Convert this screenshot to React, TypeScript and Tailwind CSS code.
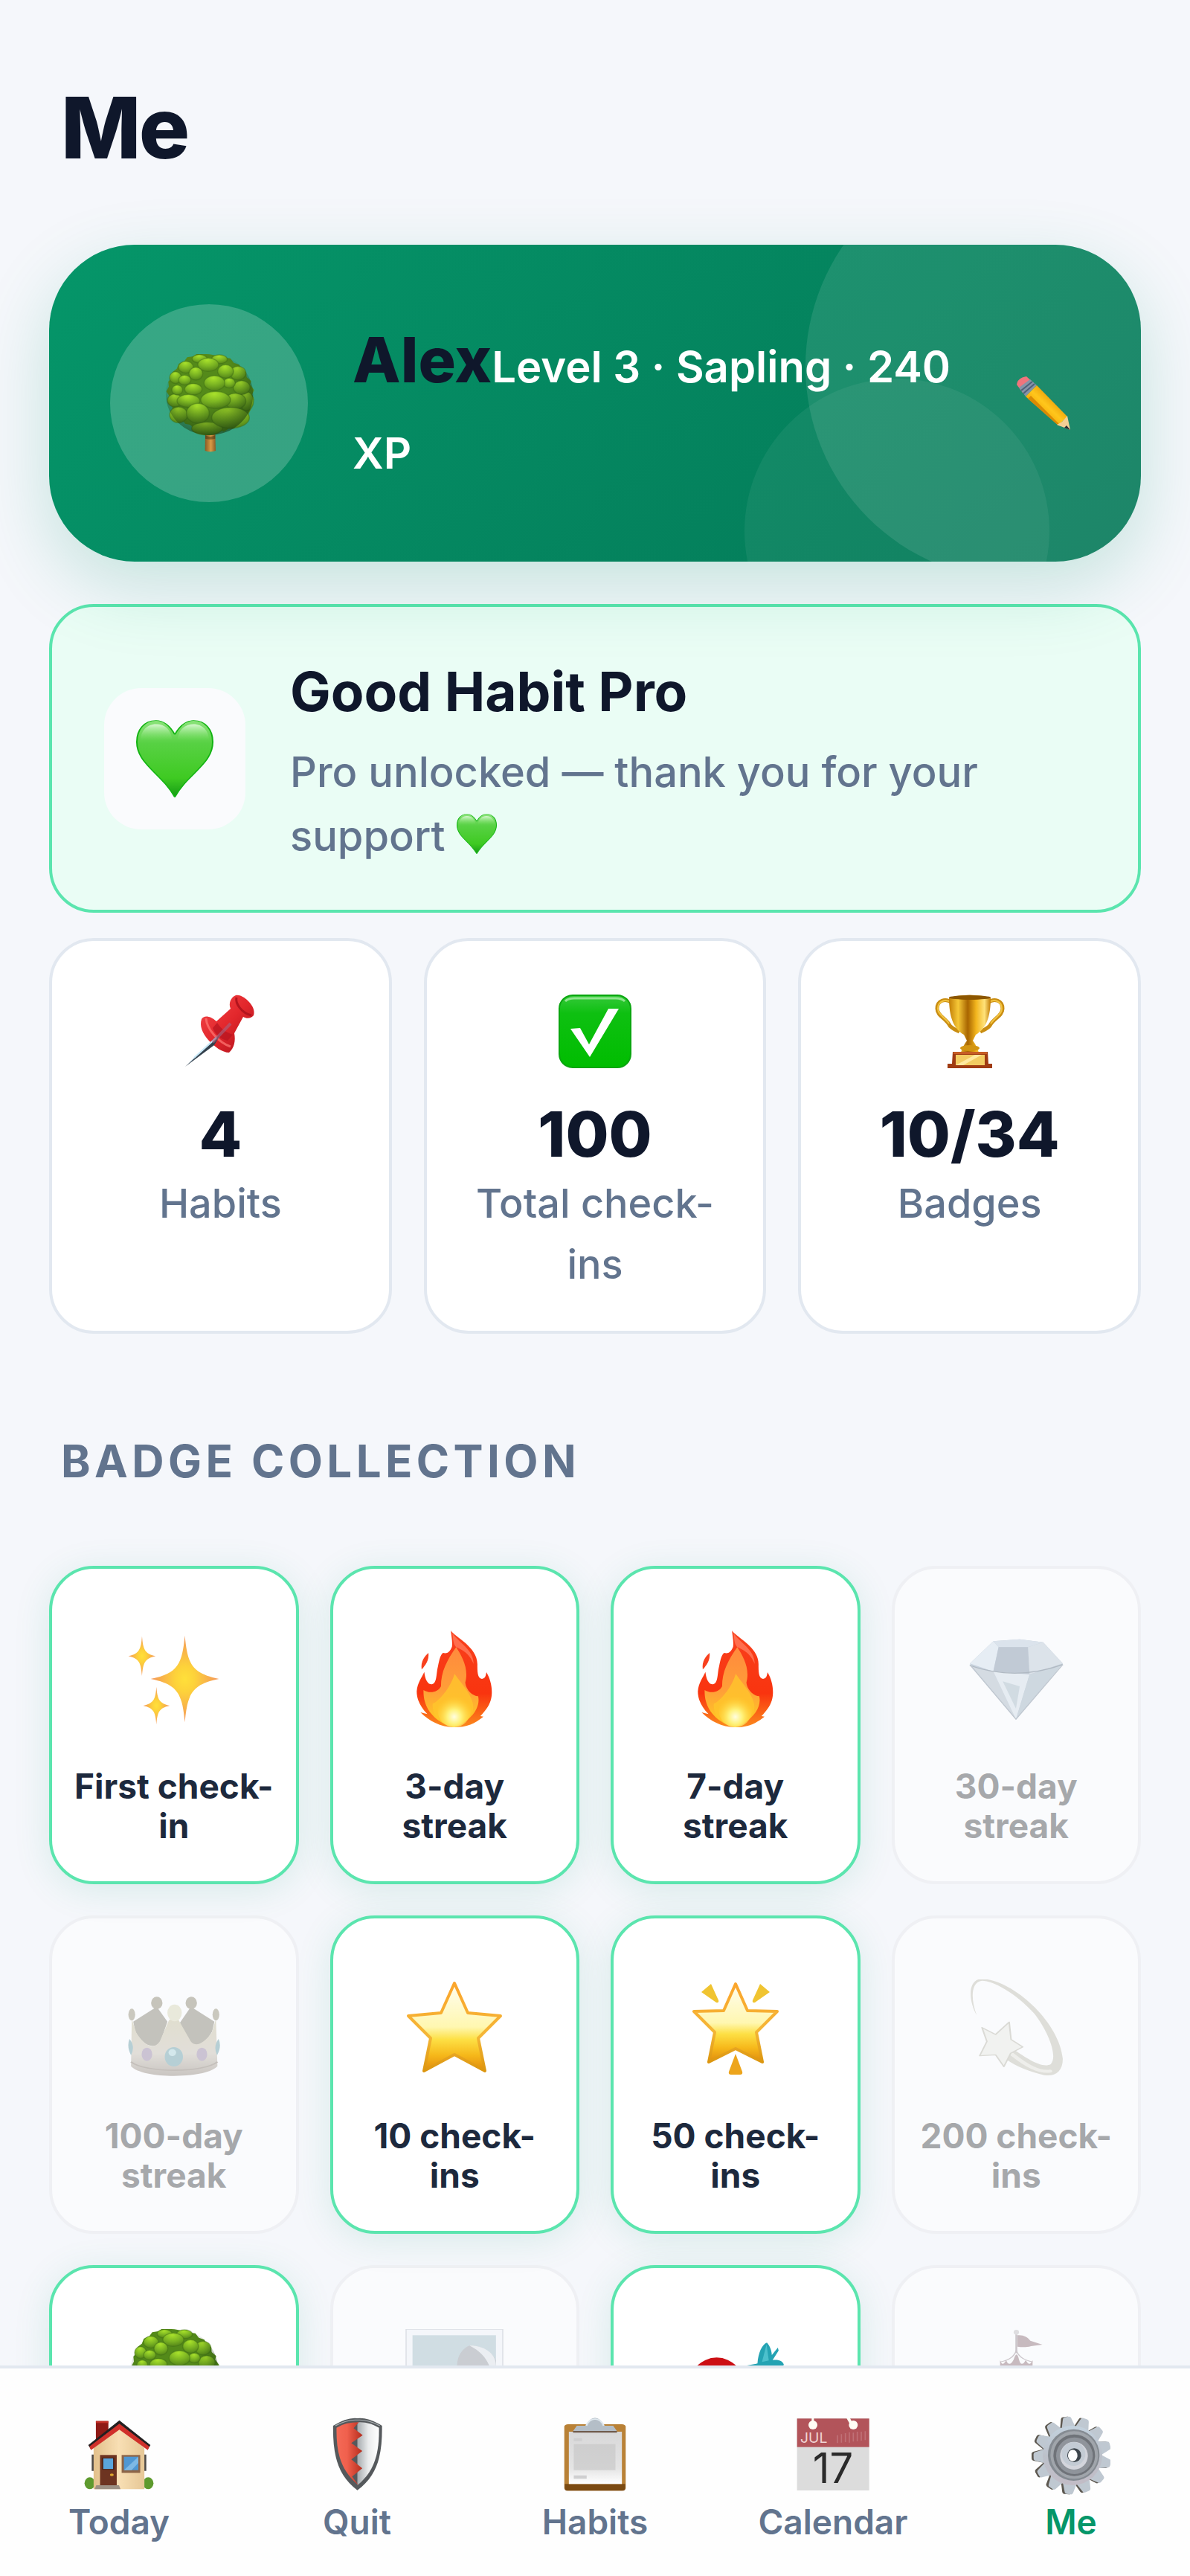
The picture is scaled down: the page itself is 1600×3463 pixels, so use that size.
import type { ReactNode } from "react";
import { clsx } from "clsx";

type IconProps = { className?: string };

type ArtProps = IconProps & { viewBox: string; children: ReactNode };

// Shared wrapper, every drawing fills its own square
function Art({ viewBox, className, children }: ArtProps) {
  return (
    <svg
      viewBox={viewBox}
      preserveAspectRatio="none"
      aria-hidden="true"
      className={clsx("shrink-0", className)}
    >
      {children}
    </svg>
  );
}

const LEAVES = [
  [235, 345, 62, 26],
  [120, 290, 36, 32],
  [105, 232, 30, 26],
  [395, 235, 28, 38],
  [350, 235, 42, 32],
  [205, 64, 30, 17],
  [285, 66, 32, 18],
  [150, 98, 30, 24],
  [360, 122, 32, 28],
  [108, 140, 24, 24],
  [310, 115, 32, 27],
  [375, 180, 34, 28],
  [240, 88, 42, 27],
  [190, 124, 28, 26],
  [145, 150, 25, 20],
  [325, 162, 24, 20],
  [115, 190, 22, 20],
  [265, 162, 42, 30],
  [180, 187, 35, 23],
  [160, 234, 46, 26],
  [270, 230, 60, 34],
  [198, 284, 46, 40],
  [330, 302, 76, 42],
];

function Tree({ className }: IconProps) {
  return (
    <Art viewBox="45 45 396 396" className={className}>
      <defs>
        <radialGradient id="leaf" cx="0.45" cy="0.15" r="0.95">
          <stop offset="0" stopColor="#a9e22b" />
          <stop offset="0.5" stopColor="#7ab322" />
          <stop offset="1" stopColor="#4a7a17" />
        </radialGradient>
        <radialGradient id="treeShade" cx="0.42" cy="0.28" r="0.75">
          <stop offset="0.45" stopColor="#1f4310" stopOpacity="0" />
          <stop offset="1" stopColor="#16350d" stopOpacity="0.6" />
        </radialGradient>
        <linearGradient id="trunk" x1="0" x2="1" y1="0" y2="0">
          <stop offset="0" stopColor="#8a5a24" />
          <stop offset="0.55" stopColor="#d99a45" />
          <stop offset="1" stopColor="#8a5a24" />
        </linearGradient>
      </defs>
      <path d="M228 365h40l2 70q-22 8-43 0z" fill="url(#trunk)" />
      <path
        d="M245 46l24 4 24-2 16 12 20 2 14 18 22 8 10 18 18 12 2 20 18 16-4 14 16 22-8 18 8 20-12 22-2 20-8 16 2 18-18 12-8 14-22 6-14 10-20 0-20 12-22-8-18 14-22-12-22 4-18-14-20 2-14-14-20-4-12-16-20-8-6-20-14-12 0-18-14-16 2-22-12-18 10-20-2-20 16-18 0-20 18-14 8-20 22-10 12-16 24-4 18-12 22 2z"
        fill="#548a1a"
      />
      {LEAVES.map(([cx, cy, rx, ry]) => (
        <ellipse key={`${cx}-${cy}`} cx={cx} cy={cy} rx={rx} ry={ry} fill="url(#leaf)" stroke="#3f6d13" strokeOpacity="0.45" strokeWidth="4" />
      ))}
      <ellipse cx="245" cy="208" rx="176" ry="164" fill="url(#treeShade)" />
      <path d="M228 372q20 12 40 0v14q-20 6-40 0z" fill="#3b2c0d" opacity="0.5" />
    </Art>
  );
}

function Pencil({ className }: IconProps) {
  return (
    <Art viewBox="0 0 74 74" className={className}>
      <defs>
        <linearGradient id="pencil" x1="0" y1="1" x2="1" y2="0">
          <stop offset="0.3" stopColor="#f5a400" />
          <stop offset="0.5" stopColor="#ffc61c" />
          <stop offset="0.7" stopColor="#e99b08" />
        </linearGradient>
      </defs>
      <path d="M1 12Q2 3 14 1l10 9-15 13z" fill="#f0747c" />
      <path d="M4 16l15-11 9 8-15 15z" fill="#8594a8" />
      <path d="M7 20l15-12M10 24l15-13" stroke="#4d6079" strokeWidth="2" />
      <path d="M13 28l15-15 41 42-12 12z" fill="url(#pencil)" />
      <path d="M16 31l4-4 41 41-4-1z" fill="#d98a05" />
      <path d="M69 54l4 19-18-7 7-4z" fill="#f4cf94" />
      <path d="M68 67l5 6-8-3z" fill="#2a2a33" />
    </Art>
  );
}

function Heart({ className }: IconProps) {
  return (
    <Art viewBox="177 571 105 315" className={className}>
      <defs>
        <linearGradient id="heart" x1="0" y1="0" x2="0" y2="1">
          <stop offset="0" stopColor="#8be37a" />
          <stop offset="0.3" stopColor="#57d143" />
          <stop offset="0.75" stopColor="#3fca22" />
          <stop offset="1" stopColor="#149a14" />
        </linearGradient>
        <linearGradient id="heartShine" x1="0" y1="0" x2="0" y2="1">
          <stop offset="0" stopColor="#d6f7cf" />
          <stop offset="1" stopColor="#7be067" stopOpacity="0" />
        </linearGradient>
      </defs>
      <path
        d="M229.500 630C223 595 215 573 204 573C188 573 178 610 178 660C178 750 212 790 229.500 885C247 790 281 750 281 660C281 610 271 573 255 573C244 573 236 595 229.500 630Z"
        fill="url(#heart)"
        stroke="#12b312"
        strokeWidth="2"
      />
      <path d="M183 655C183 615 192 588 204 588C216 588 224 610 226 650Z" fill="url(#heartShine)" />
      <path d="M276 655C276 615 267 588 255 588C243 588 235 610 233 650Z" fill="url(#heartShine)" />
    </Art>
  );
}

function Pin({ className }: IconProps) {
  return (
    <Art viewBox="0 0 100 100" className={className}>
      <defs>
        <linearGradient id="pin" x1="0" y1="0" x2="1" y2="1">
          <stop offset="0" stopColor="#f2494b" />
          <stop offset="0.5" stopColor="#e3272c" />
          <stop offset="1" stopColor="#a90f19" />
        </linearGradient>
      </defs>
      <path d="M25 33C28 28 36 28 45 36L64 19C61 12 64 4 71 1C76 0 82 3 88 9C94 15 97 22 95 28C92 32 86 33 81 30L69 52C71 62 69 72 62 78C53 78 42 70 34 61C26 52 22 42 25 33Z" fill="url(#pin)" />
      <path d="M72 4C70 12 79 25 92 28" fill="none" stroke="#b3141d" strokeWidth="3" />
      <path d="M31 32C32 46 47 64 64 70" fill="none" stroke="#ff7a75" strokeWidth="3" opacity="0.7" />
      <path d="M46 38C51 46 58 51 67 54L60 62C50 60 43 53 40 45Z" fill="#b81620" opacity="0.75" />
      <path d="M47 54L3 97L38 65Z" fill="#8fc0dc" />
      <path d="M51 53L3 97L42 68Z" fill="#33404c" />
      <path d="M45 58L15 85" stroke="#c6e6f5" strokeWidth="2" />
      <path d="M40 64L64 39" stroke="#a9607c" strokeWidth="4" opacity="0.65" />
    </Art>
  );
}

function Check({ className }: IconProps) {
  return (
    <Art viewBox="0 0 100 100" className={className}>
      <defs>
        <linearGradient id="check" x1="0" y1="0" x2="0" y2="1">
          <stop offset="0" stopColor="#35c93a" />
          <stop offset="0.25" stopColor="#0ec011" />
          <stop offset="1" stopColor="#00bd00" />
        </linearGradient>
      </defs>
      <rect x="2" y="1" width="96" height="97" rx="18" fill="url(#check)" stroke="#0aa60f" strokeWidth="2" />
      <path d="M10 9Q14 5 22 5h56q8 0 12 4" fill="none" stroke="#8fe58e" strokeWidth="3" />
      <path d="M17 46l13-1 12 22L68 19l14 0L43 84Z" fill="#fff" />
    </Art>
  );
}

function Trophy({ className }: IconProps) {
  return (
    <Art viewBox="0 0 100 100" className={className}>
      <defs>
        <linearGradient id="gold" x1="0" x2="1" y1="0" y2="0">
          <stop offset="0" stopColor="#c27e06" />
          <stop offset="0.22" stopColor="#f6c837" />
          <stop offset="0.45" stopColor="#a86500" />
          <stop offset="0.65" stopColor="#f2b51d" />
          <stop offset="0.85" stopColor="#ffe27a" />
          <stop offset="1" stopColor="#c17c05" />
        </linearGradient>
      </defs>
      <path d="M26 11C17 4 6 8 6 19C6 28 17 32 22 40C24 45 32 48 36 50M74 11C83 4 94 8 94 19C94 28 83 32 78 40C76 45 68 48 64 50" fill="none" stroke="#c98d12" strokeWidth="5" />
      <path d="M26 11C17 5 7 9 7 19C7 27 17 31 22 39M74 11C83 5 93 9 93 19C93 27 83 31 78 39" fill="none" stroke="#f3c440" strokeWidth="2" />
      <path d="M22 4Q50-3 78 4C78 30 72 46 58 54L54 62Q60 70 62 78H38Q40 70 46 62L42 54C28 46 22 30 22 4Z" fill="url(#gold)" />
      <ellipse cx="50" cy="4" rx="28" ry="3" fill="#8c5600" />
      <ellipse cx="50" cy="72" rx="13" ry="4" fill="#d39511" />
      <path d="M27 77h47l1 16h5v6H20v-6h6z" fill="#a03b12" />
      <path d="M28 77h45v3H28z" fill="#c65d25" />
      <rect x="31" y="81" width="39" height="14" fill="#f3cc62" />
      <path d="M31 95l26-14h9L41 95z" fill="#ffe9a0" />
    </Art>
  );
}

const SPARK =
  "M0-1C.08-.36 .18-.13 1 0C.18 .13 .08 .36 0 1C-.08 .36-.18 .13-1 0C-.18-.13-.08-.36 0-1Z";

function Sparkles({ className }: IconProps) {
  return (
    <Art viewBox="331 332 259 396" className={className}>
      <defs>
        <radialGradient id="spark">
          <stop offset="0" stopColor="#ffe03a" />
          <stop offset="0.3" stopColor="#fdd23a" />
          <stop offset="1" stopColor="#f4965a" />
        </radialGradient>
      </defs>
      <path d={SPARK} transform="translate(489 530) scale(90 175)" fill="url(#spark)" />
      <path d={SPARK} transform="translate(376 438) scale(36 80)" fill="url(#spark)" />
      <path d={SPARK} transform="translate(414 638) scale(35 76)" fill="url(#spark)" />
    </Art>
  );
}

function Fire({ className }: IconProps) {
  return (
    <Art viewBox="1072 332 259 396" className={className}>
      <defs>
        <linearGradient id="flame" x1="0" y1="0" x2="0" y2="1">
          <stop offset="0" stopColor="#f8401d" />
          <stop offset="0.65" stopColor="#f9340f" />
          <stop offset="1" stopColor="#fb8a1c" />
        </linearGradient>
        <linearGradient id="flameCore" x1="0" y1="0" x2="0" y2="1">
          <stop offset="0" stopColor="#ff8a3d" />
          <stop offset="0.55" stopColor="#ff9f38" />
          <stop offset="1" stopColor="#ffd21f" />
        </linearGradient>
        <radialGradient id="glow" cx="0.5" cy="0.7" r="0.6">
          <stop offset="0" stopColor="#fffde0" />
          <stop offset="0.35" stopColor="#fff27a" />
          <stop offset="1" stopColor="#ffce2e" stopOpacity="0" />
        </radialGradient>
      </defs>
      <path d="M1192 335C1203 362 1262 400 1262 470C1262 500 1262 528 1274 530C1284 528 1284 515 1286 503C1296 530 1301 560 1300 590C1299 630 1285 655 1270 680L1278 682C1255 710 1235 725 1200 725C1165 725 1135 700 1112 665L1130 672C1110 640 1102 610 1102 580C1104 545 1115 525 1122 502C1124 530 1130 552 1142 552C1156 548 1153 510 1158 480C1162 450 1165 430 1172 425C1182 430 1190 420 1195 400C1197 380 1193 355 1192 335Z" fill="url(#flame)" />
      <path d="M1133 425C1122 440 1112 460 1115 492C1125 475 1135 455 1133 425Z" fill="#f8401d" />
      <path d="M1196 345C1212 385 1252 410 1252 470C1240 420 1216 410 1205 400C1198 390 1198 365 1196 345Z" fill="#ff6d4d" />
      <path d="M1206 402C1222 440 1240 490 1230 545C1232 575 1250 600 1264 600C1272 650 1240 705 1200 724C1150 706 1118 650 1120 575C1135 590 1158 585 1166 560C1166 500 1182 455 1206 402Z" fill="url(#flameCore)" />
      <path d="M1202 510C1225 560 1258 610 1250 660C1240 700 1220 718 1198 724C1165 715 1142 680 1144 630C1160 620 1190 570 1202 510Z" fill="#ffc52c" opacity="0.8" />
      <ellipse cx="1201" cy="655" rx="44" ry="70" fill="url(#glow)" />
    </Art>
  );
}

function Diamond({ className }: IconProps) {
  return (
    <Art viewBox="980 332 260 396" className={className}>
      <path d="M1050 378L1120 370L1182 382L1234 468L1110 693L988 468Z" fill="#9aaec2" />
      <path d="M1050 378L1064 402L1050 500L988 468Z" fill="#d9e4ee" />
      <path d="M1050 378L1120 370L1182 382L1142 402H1064Z" fill="#c3d1de" />
      <path d="M1064 402H1142L1146 512L1050 500Z" fill="#8f9fb1" />
      <path d="M1142 402L1182 382L1234 468L1146 512Z" fill="#c5d0da" />
      <path d="M988 476L1050 500L1110 693Z" fill="#b4c0cb" />
      <path d="M1050 500L1146 512L1110 693Z" fill="#d8e3ea" />
      <path d="M1075 540L1120 560L1110 650Z" fill="#afc0cb" />
      <path d="M1146 512L1234 468L1110 693Z" fill="#a9bac7" />
      <path d="M988 476Q1110 540 1234 472" fill="none" stroke="#6e7d8c" strokeWidth="4" />
      <path d="M988 472L1110 693L1234 472" fill="none" stroke="#8b99a6" strokeWidth="3" />
    </Art>
  );
}

function Crown({ className }: IconProps) {
  return (
    <Art viewBox="328 330 259 396" className={className}>
      <defs>
        <linearGradient id="crown" x1="0" y1="0" x2="0" y2="1">
          <stop offset="0" stopColor="#cdc7a4" />
          <stop offset="0.6" stopColor="#cfc7b8" />
          <stop offset="1" stopColor="#9f958a" />
        </linearGradient>
      </defs>
      <path d="M350 500L412 440L440 500L420 590Q385 620 355 540Z" fill="#928e7e" />
      <path d="M564 500L502 440L473 505L500 590Q530 615 558 540Z" fill="#928e7e" />
      <ellipse cx="412" cy="425" rx="15" ry="25" fill="#98927c" />
      <ellipse cx="503" cy="425" rx="15" ry="25" fill="#98927c" />
      <path d="M346 490L358 545C380 600 405 615 420 580L444 495Q457 480 470 495L498 570C510 610 535 590 557 545L568 490L572 680C540 732 375 732 344 680Z" fill="url(#crown)" />
      <ellipse cx="459" cy="465" rx="19" ry="34" fill="#dfdcbc" />
      <ellipse cx="346" cy="472" rx="9" ry="24" fill="#a19b83" />
      <ellipse cx="568" cy="472" rx="9" ry="24" fill="#a19b83" />
      <ellipse cx="457" cy="642" rx="24" ry="39" fill="#78a9b0" />
      <ellipse cx="453" cy="625" rx="10" ry="14" fill="#b5dade" />
      <ellipse cx="386" cy="632" rx="14" ry="27" fill="#a391ad" />
      <ellipse cx="531" cy="632" rx="14" ry="27" fill="#a391ad" />
      <path d="M340 570Q356 600 344 636Q332 600 340 570M575 570Q560 600 571 636Q584 600 575 570" fill="#78a9b0" />
      <path d="M344 662C380 708 535 708 572 662" fill="none" stroke="#94897c" strokeWidth="5" />
    </Art>
  );
}

function StarDefs() {
  return (
    <defs>
      <linearGradient id="star" x1="0" y1="0" x2="0" y2="1">
        <stop offset="0" stopColor="#fffdf0" />
        <stop offset="0.5" stopColor="#fff7b0" />
        <stop offset="0.64" stopColor="#fde045" />
        <stop offset="0.82" stopColor="#f6b81a" />
        <stop offset="1" stopColor="#e08a0d" />
      </linearGradient>
      <linearGradient id="starEdge" x1="0" y1="0" x2="0" y2="1">
        <stop offset="0" stopColor="#fba52c" />
        <stop offset="0.6" stopColor="#f4b636" />
        <stop offset="1" stopColor="#dc960f" />
      </linearGradient>
    </defs>
  );
}

function Star({ className }: IconProps) {
  return (
    <Art viewBox="0 0 132 132" className={className}>
      <StarDefs />
      <path d="M66 5L84 45L128 49L98 79L107 123L66 101L25 123L34 79L4 49L48 45Z" fill="url(#star)" stroke="url(#starEdge)" strokeWidth="4" strokeLinejoin="round" />
    </Art>
  );
}

function GlowingStar({ className }: IconProps) {
  return (
    <Art viewBox="0 0 132 132" className={className}>
      <StarDefs />
      <path d="M66 6L82 42L122 43L94 71L102 111L66 93L30 111L38 71L10 43L50 42Z" fill="url(#star)" stroke="url(#starEdge)" strokeWidth="4" strokeLinejoin="round" />
      <path d="M33 6L20 17L40 31Q44 32 43 28ZM99 6L112 17L92 31Q88 32 89 28Z" fill="#f0c431" />
      <path d="M66 100L57 124Q56 128 60 128H72Q76 128 75 124Z" fill="#eda51c" />
    </Art>
  );
}

function Dizzy({ className }: IconProps) {
  return (
    <Art viewBox="980 330 260 396" className={className}>
      <path d="M1006 474C985 420 980 328 1020 328C1100 330 1225 500 1234 650C1234 700 1215 722 1185 716C1150 705 1110 680 1086 655L1104 612C1140 650 1180 690 1202 672C1222 640 1195 540 1160 470C1110 385 1050 335 1020 335C990 340 990 410 1006 474Z" fill="#c9c7b8" />
      <path d="M1100 632C1140 680 1170 705 1200 700" fill="none" stroke="#e9e7dc" strokeWidth="12" strokeLinecap="round" />
      <path d="M1020 524L1056 552L1092 502L1097 572L1128 602L1096 628L1078 682L1056 634L1014 638L1033 580Z" fill="#efeee6" stroke="#c0beb0" strokeWidth="4" strokeLinejoin="round" />
    </Art>
  );
}

function Picture({ className }: IconProps) {
  return (
    <Art viewBox="1068 303 260 396" className={className}>
      <rect x="1070" y="304" width="256" height="390" fill="#f4f6fa" stroke="#c4c9d1" strokeWidth="3" />
      <rect x="1087" y="328" width="221" height="340" fill="#adc4cd" />
      <path d="M1205 452C1205 410 1220 380 1238 370C1275 370 1300 400 1308 430V668H1200Z" fill="#a0a4aa" />
      <path d="M1238 370C1270 368 1308 395 1308 450H1290C1282 420 1265 390 1238 370Z" fill="#e3e7ea" />
    </Art>
  );
}

function Target({ className }: IconProps) {
  return (
    <Art viewBox="240 303 260 396" className={className}>
      <ellipse cx="320" cy="548" rx="78" ry="130" fill="#cc0f14" />
      <ellipse cx="324" cy="556" rx="56" ry="96" fill="#f5f5f5" />
      <ellipse cx="324" cy="556" rx="36" ry="62" fill="#cc0f14" />
      <path d="M324 540L430 455" stroke="#5b6670" strokeWidth="8" />
      <path d="M428 442C430 400 440 365 453 358C462 372 466 395 466 408L482 378L484 390L468 428C485 425 496 432 498 448L470 470L400 450Z" fill="#24a3b3" />
      <path d="M452 365L458 430L440 436Z" fill="#4cc0cc" />
    </Art>
  );
}

function CircusTent({ className }: IconProps) {
  return (
    <Art viewBox="980 303 260 396" className={className}>
      <path d="M1111 315V400" stroke="#a3959b" strokeWidth="5" />
      <ellipse cx="1111" cy="316" rx="7" ry="10" fill="#c9c5c6" />
      <path d="M1114 328C1130 326 1140 335 1148 350L1180 366L1150 372C1135 378 1125 376 1114 374Z" fill="#9b7f84" />
      <path d="M1111 388C1105 420 1085 430 1068 436M1111 388C1117 420 1138 430 1154 436" fill="none" stroke="#a3959b" strokeWidth="3" />
      <path d="M1068 428q6 30 16 0q8 32 20-2q8-40 14 0q6 34 18 2q10 30 18 0v60h-86z" fill="#9b7f84" />
      <path d="M1068 488H1154L1220 690H1000Z" fill="#b6898d" />
    </Art>
  );
}

function House({ className }: IconProps) {
  return (
    <Art viewBox="210 651 208 318" className={className}>
      <defs>
        <linearGradient id="wall" x1="0" x2="1" y1="0" y2="0">
          <stop offset="0" stopColor="#e2c08b" />
          <stop offset="0.5" stopColor="#f8dfb4" />
          <stop offset="1" stopColor="#e6c796" />
        </linearGradient>
      </defs>
      <path d="M242 806h6v66h-6zM380 806h6v66h-6z" fill="#4d4a48" />
      <path d="M253 671h33v60l-33 35z" fill="#8e1a16" />
      <path d="M253 671h33v8h-33z" fill="#c33128" />
      <ellipse cx="237" cy="922" rx="14" ry="24" fill="#5e9a2e" />
      <ellipse cx="391" cy="922" rx="14" ry="24" fill="#5e9a2e" />
      <path d="M315 695L381 780V946H247V780Z" fill="url(#wall)" />
      <path d="M315 668L397 768L390 785L315 695L240 785L233 768Z" fill="#231f20" />
      <path d="M315 682L394 774L390 788L315 706L240 788L236 774Z" fill="#d0302a" />
      <rect x="264" y="808" width="44" height="124" fill="#6d3421" />
      <rect x="271" y="820" width="29" height="46" fill="#5aa5dc" stroke="#4a2014" strokeWidth="3" />
      <circle cx="295" cy="888" r="5" fill="#e0a92e" />
      <path d="M254 930h60l4 16h-68z" fill="#9d9184" />
      <rect x="321" y="808" width="49" height="72" fill="#8c6548" />
      <rect x="327" y="815" width="38" height="54" fill="#4f97d3" />
      <path d="M327 869l38-54v25l-18 29z" fill="#7db8e5" />
    </Art>
  );
}

function Shield({ className }: IconProps) {
  return (
    <Art viewBox="837 651 208 318" className={className}>
      <defs>
        <linearGradient id="shieldRed" x1="0" x2="1" y1="0" y2="0">
          <stop offset="0" stopColor="#f46a56" />
          <stop offset="0.4" stopColor="#f0604d" />
          <stop offset="1" stopColor="#b52c1c" />
        </linearGradient>
        <linearGradient id="shieldSteel" x1="0" x2="1" y1="0" y2="0">
          <stop offset="0" stopColor="#a6abae" />
          <stop offset="0.5" stopColor="#e9ebec" />
          <stop offset="1" stopColor="#ffffff" />
        </linearGradient>
      </defs>
      <path d="M878 690Q915 655 942 660Q970 655 1007 690C1008 810 995 890 942 950C890 890 877 810 878 690Z" fill="#55595c" />
      <path d="M942 676Q972 672 999 698C1000 810 985 876 942 930Z" fill="url(#shieldSteel)" />
      <path d="M946 676Q910 676 887 698C886 800 898 870 945 930L928 895L955 862L926 826L955 792L926 760L956 728L932 700Z" fill="url(#shieldRed)" />
      <path d="M884 690Q915 664 942 667Q970 664 1001 690" fill="none" stroke="#a9afb2" strokeWidth="3" />
    </Art>
  );
}

function Clipboard({ className }: IconProps) {
  return (
    <Art viewBox="1464 651 208 318" className={className}>
      <defs>
        <linearGradient id="sheet" x1="0" y1="0" x2="0" y2="1">
          <stop offset="0" stopColor="#d8d8d9" />
          <stop offset="0.7" stopColor="#e4e4e4" />
          <stop offset="1" stopColor="#ffffff" />
        </linearGradient>
      </defs>
      <rect x="1487" y="684" width="162" height="268" rx="10" fill="#b98136" />
      <path d="M1488 925h160v16q0 11-8 11h-144q-8 0-8-11z" fill="#7b4a12" />
      <rect x="1499" y="714" width="140" height="211" fill="url(#sheet)" />
      <path d="M1512 764h110v105h-110z" fill="#c4c4c5" opacity="0.6" />
      <path d="M1512 740h22v12h-22zM1512 890h34v14h-34z" fill="#cfcfd0" />
      <path d="M1510 712L1520 690H1545Q1552 660 1568 658Q1584 660 1591 690H1616L1626 712Z" fill="#b4bec7" />
      <path d="M1545 690Q1552 664 1568 663Q1584 664 1591 690" fill="none" stroke="#dfe8ef" strokeWidth="5" />
      <path d="M1510 711h116v7h-116z" fill="#705c4e" />
    </Art>
  );
}

function CalendarPage({ className }: IconProps) {
  return (
    <svg viewBox="21 561 318 318" aria-hidden="true" className={clsx("shrink-0", className)}>
      <rect x="35" y="571" width="291" height="290" fill="#dcdcdc" />
      <rect x="35" y="571" width="291" height="115" fill="#b2545a" />
      <circle cx="99" cy="597" r="18" fill="#fffdf4" />
      <circle cx="262" cy="597" r="18" fill="#fffdf4" />
      <path d="M94 570h9v16h-9zM235 570h14l8 16-10 6z" fill="#fffdf4" />
      <path d="M198 670v-32M214 668v-34M230 666v-36M246 668v-42M262 664v-36M278 662v-38M294 660v-36M310 658v-36" stroke="#c07076" strokeWidth="5" />
      <text x="48" y="670" fontSize="58" fontWeight="400" fill="#f1d5d5" className="font-['Inter']">
        JUL
      </text>
      <text x="180" y="832" textAnchor="middle" fontSize="168" fontWeight="400" fill="#2b2b2b" className="font-['Inter']">
        17
      </text>
    </svg>
  );
}

const TEETH = Array.from({ length: 13 }, (_, i) => -8 + (i * 360) / 13);

function Gear({ className }: IconProps) {
  return (
    <svg viewBox="981 561 318 318" aria-hidden="true" className={clsx("shrink-0", className)}>
      <defs>
        <linearGradient id="steel" x1="0" y1="0" x2="0" y2="1">
          <stop offset="0" stopColor="#c3d2de" />
          <stop offset="0.5" stopColor="#bcc1ca" />
          <stop offset="1" stopColor="#c2bcc6" />
        </linearGradient>
      </defs>
      <g fill="#5d5850">
        {TEETH.map((angle) => (
          <path key={angle} d="M1108 622L1120 570Q1122 563 1129 563H1147Q1154 563 1156 570L1168 622Z" transform={`rotate(${angle} 1138 720)`} />
        ))}
      </g>
      <g fill="#bfc8d1">
        {TEETH.map((angle) => (
          <path key={angle} d="M1114 622L1128 570Q1130 563 1137 563H1153Q1160 563 1162 570L1178 622Z" transform={`rotate(${angle} 1146 720)`} />
        ))}
      </g>
      <circle cx="1146" cy="720" r="120" fill="url(#steel)" />
      <circle cx="1151" cy="718" r="104" fill="#858b92" />
      <circle cx="1153" cy="718" r="96" fill="#a0a5ab" />
      <circle cx="1153" cy="719" r="84" fill="#6f7379" />
      <circle cx="1154" cy="721" r="74" fill="#8f949b" />
      <circle cx="1152" cy="721" r="56" fill="#d3d5dc" />
      <circle cx="1150" cy="714" r="48" fill="#c3cbd4" />
      <circle cx="1153" cy="719" r="28" fill="#3e464d" />
      <ellipse cx="1147" cy="720" rx="19" ry="23" fill="#fff" />
    </svg>
  );
}

const STATS = [
  { icon: Pin, value: "4", label: "Habits" },
  { icon: Check, value: "100", label: "Total check-ins" },
  { icon: Trophy, value: "10/34", label: "Badges" },
];

const BADGES = [
  { icon: Sparkles, label: "First check-in", earned: true },
  { icon: Fire, label: "3-day streak", earned: true },
  { icon: Fire, label: "7-day streak", earned: true },
  { icon: Diamond, label: "30-day streak", earned: false },
  { icon: Crown, label: "100-day streak", earned: false },
  { icon: Star, label: "10 check-ins", earned: true },
  { icon: GlowingStar, label: "50 check-ins", earned: true },
  { icon: Dizzy, label: "200 check-ins", earned: false },
  { icon: Tree, earned: true },
  { icon: Picture, earned: false },
  { icon: Target, earned: true },
  { icon: CircusTent, earned: false },
];

const TABS = [
  { icon: House, label: "Today" },
  { icon: Shield, label: "Quit" },
  { icon: Clipboard, label: "Habits" },
  { icon: CalendarPage, label: "Calendar" },
  { icon: Gear, label: "Me" },
];

function ProfileCard() {
  return (
    <section className="relative flex items-center gap-[60px] overflow-hidden rounded-[115px] bg-linear-135 from-[#059669] to-[#047857] px-[82px] py-20 shadow-[0_33px_98px_rgba(5,150,105,0.2)]">
      <div className="absolute -top-[123px] -right-[123px] size-[574px] rounded-full bg-white/10" />
      <div className="absolute -bottom-[164px] right-[123px] size-[410px] rounded-full bg-white/6" />
      <div className="relative flex size-[266px] shrink-0 items-center justify-center rounded-full bg-white/20">
        <Tree className="size-[132px]" />
      </div>
      <div className="relative min-w-0 flex-1 text-[84px] leading-[116px]">
        <strong className="leading-none font-extrabold text-slate-900">Alex</strong>
        <span className="text-[58px] leading-none font-semibold text-white">
          Level 3 · Sapling · 240 XP
        </span>
      </div>
      <button
        type="button"
        aria-label="Edit profile"
        className="relative flex size-[98px] shrink-0 items-center justify-center"
      >
        <Pencil className="size-[74px]" />
      </button>
    </section>
  );
}

function ProCard() {
  return (
    <section className="mt-[57px] flex items-center gap-[60px] rounded-[60px] border-4 border-[#5be5ae] bg-[#eafdf5] px-[70px] py-14">
      <div className="flex size-[190px] shrink-0 items-center justify-center rounded-[50px] bg-[#fafbfd]">
        <Heart className="size-[104px]" />
      </div>
      <div className="min-w-0 flex-1">
        <h2 className="text-[73px] leading-[115px] font-bold text-slate-900">
          Good Habit Pro
        </h2>
        <p className="mt-2 text-[56px] leading-[86px] font-medium text-slate-500">
          Pro unlocked — thank you for your support{" "}
          <Heart className="inline-block size-[54px] align-[-4px]" />
        </p>
      </div>
    </section>
  );
}

export default function App() {
  return (
    <div className="flex h-screen flex-col bg-[#f5f7fb] font-['Inter',sans-serif] text-slate-900">
      <main className="min-h-0 flex-1 overflow-y-auto px-[66px] pt-[102px] pb-16 [scrollbar-width:none]">
        <h1 className="mb-[87px] px-4 text-[114px] leading-[140px] font-extrabold tracking-tight">
          Me
        </h1>

        <ProfileCard />
        <ProCard />

        <section className="mt-[34px] grid grid-cols-3 gap-[43px]">
          {STATS.map(({ icon: Icon, value, label }) => (
            <div
              key={label}
              className="rounded-[60px] border-4 border-slate-200 bg-white px-10 py-12 text-center"
            >
              <div className="flex h-[148px] items-center justify-center">
                <Icon className="size-[100px]" />
              </div>
              <p className="mt-4 text-[84px] leading-[96px] font-extrabold">{value}</p>
              <p className="mt-1 text-[54px] leading-[82px] font-medium text-slate-500">
                {label}
              </p>
            </div>
          ))}
        </section>

        <h2 className="mt-[125px] mb-[95px] px-4 text-[60px] leading-[92px] font-bold tracking-[0.09em] text-slate-500 uppercase">
          Badge collection
        </h2>

        <ul className="grid grid-cols-4 gap-[42px]">
          {BADGES.map(({ icon: Icon, label, earned }, index) => (
            <li
              key={index}
              className={clsx(
                "rounded-[60px] border-4 bg-white px-6 py-12 text-center",
                earned
                  ? "border-[#5be5ae] text-slate-800 shadow-[0_8px_50px_rgba(5,150,105,0.12)]"
                  : "border-[#eaebee] text-[#5a5b5e] opacity-50"
              )}
            >
              <div className="flex h-[200px] items-center justify-center">
                <Icon className="size-[132px]" />
              </div>
              {label && (
                <p className="mt-[18px] text-[46px] leading-[53px] font-bold">{label}</p>
              )}
            </li>
          ))}
        </ul>
      </main>

      <nav className="relative grid shrink-0 grid-cols-5 border-t-4 border-slate-200 bg-[#fefefe] pt-16 pb-[45px]">
        {TABS.map(({ icon: Icon, label }) => (
          <a
            key={label}
            href={`#${label.toLowerCase()}`}
            aria-current={label === "Me" ? "page" : undefined}
            className={clsx(
              "flex flex-col items-center gap-2 text-[46px] leading-[56px] font-semibold",
              label === "Me" ? "text-[#059669]" : "text-slate-500"
            )}
          >
            <Icon className="size-[106px]" />
            {label}
          </a>
        ))}
      </nav>
    </div>
  );
}
